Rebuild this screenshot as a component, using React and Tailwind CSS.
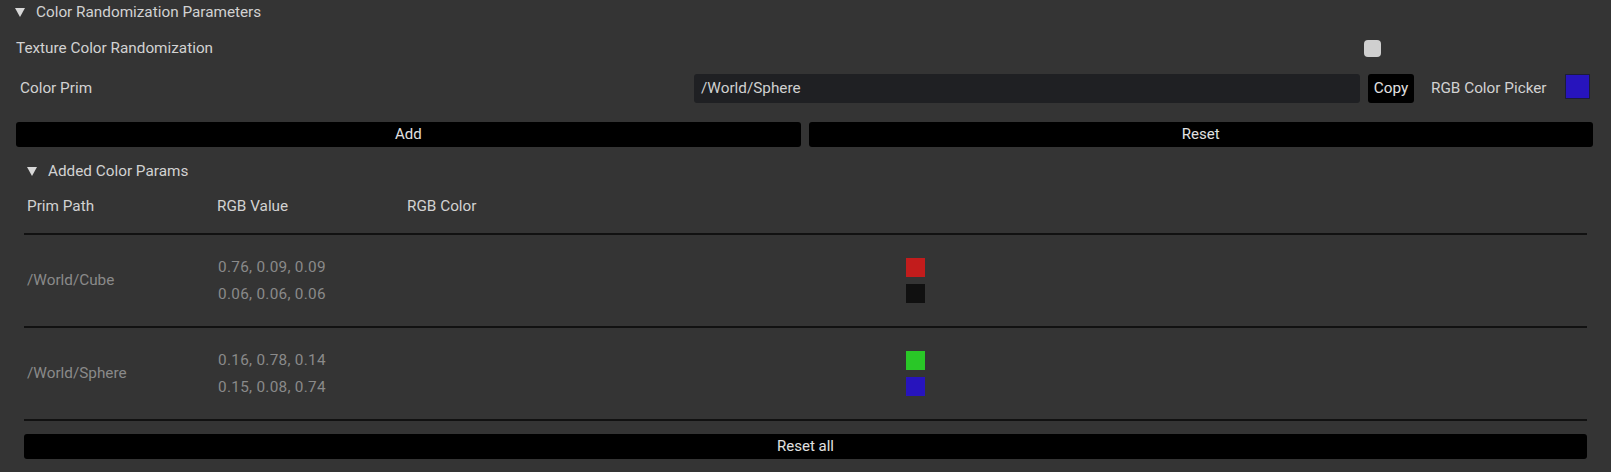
const ROWS = [
  {
    path: '/World/Cube',
    values: [
      { text: '0.76, 0.09, 0.09', color: 'bg-[#c21c1c]' },
      { text: '0.06, 0.06, 0.06', color: 'bg-[#101010]' },
    ],
  },
  {
    path: '/World/Sphere',
    values: [
      { text: '0.16, 0.78, 0.14', color: 'bg-[#29c727]' },
      { text: '0.15, 0.08, 0.74', color: 'bg-[#2714bd]' },
    ],
  },
];

function Caret() {
  return (
    <svg width="10" height="9" viewBox="0 0 10 9" className="shrink-0">
      <path d="M0 0 H10 L5 9 Z" fill="#d8d8d8" />
    </svg>
  );
}

function BlackButton({ children, className = '' }) {
  return (
    <button className={`h-[25px] rounded-[3px] bg-black text-[15px] text-[#e0e0e0] flex items-center justify-center ${className}`}>
      {children}
    </button>
  );
}

export default function App() {
  return (
    <div
      className="w-[1611px] h-[472px] overflow-hidden bg-[#343434] text-[#d2d2d2] text-[15.3px] pt-[1px]"
      style={{ fontFamily: 'Roboto, "Liberation Sans", sans-serif' }}
    >
      {/* section header */}
      <div className="h-[22px] flex items-center pl-[15px] gap-[11px]">
        <Caret />
        <span>Color Randomization Parameters</span>
      </div>

      {/* texture toggle */}
      <div className="mt-[14px] h-[22px] flex items-center pl-[16px]">
        <span className="w-[1348px]">Texture Color Randomization</span>
        <div className="w-[17px] h-[17px] rounded-[4px] bg-[#cfcfcf]" />
      </div>

      {/* color prim */}
      <div className="mt-[15px] h-[29px] flex items-center pl-[20px]">
        <span className="w-[674px]">Color Prim</span>
        <div className="w-[666px] h-[29px] rounded-[3px] bg-[#1f2023] flex items-center pl-[7px] text-[#d0d0d0]">
          /World/Sphere
        </div>
        <button className="ml-[8px] w-[46px] h-[29px] rounded-[3px] bg-black text-[#e0e0e0]">Copy</button>
        <span className="ml-[17px] w-[134px]">RGB Color Picker</span>
        <div className="w-[25px] h-[25px] self-start bg-[#2714bd] border border-[#1c1c3a]" />
      </div>

      {/* add / reset */}
      <div className="mt-[19px] flex gap-[8px] pl-[16px] pr-[18px]">
        <BlackButton className="flex-1">Add</BlackButton>
        <BlackButton className="flex-1">Reset</BlackButton>
      </div>

      {/* added params */}
      <div className="mt-[13px] h-[22px] flex items-center pl-[27px] gap-[11px]">
        <Caret />
        <span>Added Color Params</span>
      </div>

      <div className="pl-[24px] pr-[24px]">
        <div className="h-[53px] flex items-start pt-[13px] pl-[3px] border-b-2 border-[#111111]">
          <span className="w-[190px]">Prim Path</span>
          <span className="w-[190px]">RGB Value</span>
          <span>RGB Color</span>
        </div>

        {ROWS.map((row) => (
          <div key={row.path} className="h-[93px] flex items-center pl-[3px] border-b-2 border-[#111111] text-[#8a8a8a]">
            <span className="w-[191px]">{row.path}</span>
            <div className="w-[688px] flex flex-col gap-[8px] tracking-[0.3px]">
              {row.values.map((v) => (
                <span key={v.text} className="h-[19px] leading-[19px]">{v.text}</span>
              ))}
            </div>
            <div className="flex flex-col gap-[7px]">
              {row.values.map((v) => (
                <div key={v.text} className={`w-[19px] h-[19px] ${v.color}`} />
              ))}
            </div>
          </div>
        ))}

        <BlackButton className="mt-[13px] w-full">Reset all</BlackButton>
      </div>
    </div>
  );
}
